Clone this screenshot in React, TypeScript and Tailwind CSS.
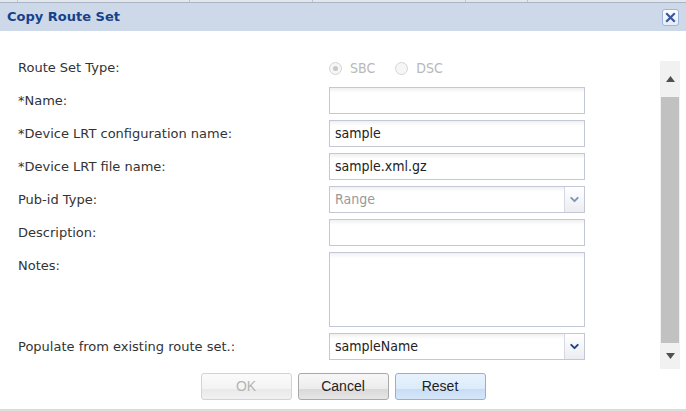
import { ChevronDown } from "lucide-react";

const font = { fontFamily: '"DejaVu Sans Condensed", "DejaVu Sans", sans-serif' };
const labelFont = { fontFamily: '"DejaVu Sans", sans-serif' };

const inputCls =
  "h-[27px] w-[256px] border border-[#c3c7d6] bg-[linear-gradient(to_bottom,#f0f0f0_0px,#ffffff_5px)] px-[5px] text-[14px] text-[#222] flex items-center";

function Field({ value }: { value?: string }) {
  return <div className={inputCls}>{value}</div>;
}

function Select({ value, disabled }: { value: string; disabled?: boolean }) {
  return (
    <div className="flex h-[27px] w-[256px] border border-[#c3c7d6] bg-[linear-gradient(to_bottom,#f0f0f0_0px,#ffffff_5px)]">
      <div
        className={
          "flex flex-1 items-center px-[5px] text-[14px] " +
          (disabled ? "text-[#9a9a9a]" : "text-[#222]")
        }
      >
        {value}
      </div>
      <div className="flex w-[20px] items-center justify-center border-l border-[#d6d9e3] bg-[linear-gradient(to_bottom,#ffffff,#ebedf2)]">
        <ChevronDown
          className={"size-[13px] " + (disabled ? "text-[#7f93b8]" : "text-[#1f3f7f]")}
          strokeWidth={3.5}
        />
      </div>
    </div>
  );
}

function Row({ label, children, top }: { label: string; children: React.ReactNode; top?: boolean }) {
  return (
    <div className={"flex " + (top ? "items-start" : "items-center")}>
      <div className={"w-[311px] text-[13px] text-[#333] " + (top ? "pt-[4px]" : "")} style={labelFont}>
        {label}
      </div>
      {children}
    </div>
  );
}

function Radio({ label, checked }: { label: string; checked?: boolean }) {
  return (
    <div className="flex items-center gap-[8px] text-[14px] text-[#b8b8b8]">
      <span className="flex size-[13px] items-center justify-center rounded-full border border-[#d4d4d4] bg-[#f6f6f6]">
        {checked && <span className="size-[5px] rounded-full bg-[#c8c8c8]" />}
      </span>
      {label}
    </div>
  );
}

function Btn({ label, kind }: { label: string; kind: "off" | "plain" | "blue" }) {
  const cls = {
    off: "border-[#d3d3d3] bg-[linear-gradient(to_bottom,#fbfbfb_0%,#f3f3f3_60%,#e9e9e9_61%,#f1f1f1_100%)] text-[#b4b4b4]",
    plain:
      "border-[#a9a9a9] bg-[linear-gradient(to_bottom,#f7f7f7_0%,#ececec_60%,#d9d9d9_61%,#e6e6e6_100%)] text-[#222]",
    blue: "border-[#8fb0db] bg-[linear-gradient(to_bottom,#e8f2fd_0%,#dcebfb_60%,#c7ddf6_61%,#d6e6f8_100%)] text-[#222]",
  }[kind];
  return (
    <div
      className={"flex h-[27px] w-[91px] items-center justify-center rounded-[3px] border text-[14px] " + cls}
      style={{ fontFamily: '"Liberation Sans", Arial, sans-serif' }}
    >
      {label}
    </div>
  );
}

export default function App() {
  return (
    <div className="flex h-[411px] w-[686px] flex-col overflow-hidden bg-white" style={font}>
      {/* strip of the page behind */}
      <div className="flex h-[3px] border-b border-[#a9b4c4] bg-[#e4e8ee]">
        <div className="w-[18px] border-r border-[#c0c6cf]" />
        <div className="w-[172px] border-r border-[#c0c6cf]" />
        <div className="w-[123px] border-r border-[#c0c6cf]" />
        <div className="w-[153px] border-r border-[#c0c6cf]" />
        <div className="w-[62px] border-r border-[#c0c6cf]" />
      </div>

      {/* title bar */}
      <div className="flex h-[28px] items-center justify-between bg-[#cdd9e8] pl-[7px] pr-[7px]">
        <span className="text-[13px] font-bold text-[#15428b]" style={labelFont}>
          Copy Route Set
        </span>
        <div className="flex size-[17px] items-center justify-center rounded-[3px] border border-[#9fb5dc] bg-[linear-gradient(to_bottom,#ffffff,#e6edf8)]">
          <svg width="11" height="11" viewBox="0 0 11 11">
            <path d="M2 2 L9 9 M9 2 L2 9" stroke="#3b579d" strokeWidth="2.2" strokeLinecap="square" />
          </svg>
        </div>
      </div>

      {/* body */}
      <div className="flex flex-1">
        <div className="flex flex-1 flex-col gap-[6px] pl-[18px] pt-[24px]">
          <Row label="Route Set Type:">
            <div className="flex h-[26px] items-center gap-[20px]">
              <Radio label="SBC" checked />
              <Radio label="DSC" />
            </div>
          </Row>
          <Row label="*Name:">
            <Field />
          </Row>
          <Row label="*Device LRT configuration name:">
            <Field value="sample" />
          </Row>
          <Row label="*Device LRT file name:">
            <Field value="sample.xml.gz" />
          </Row>
          <Row label="Pub-id Type:">
            <Select value="Range" disabled />
          </Row>
          <Row label="Description:">
            <Field />
          </Row>
          <Row label="Notes:" top>
            <div className="h-[75px] w-[256px] border border-[#c3c7d6] bg-[linear-gradient(to_bottom,#f0f0f0_0px,#ffffff_5px)]" />
          </Row>
          <Row label="Populate from existing route set.:">
            <Select value="sampleName" />
          </Row>
        </div>

        {/* scrollbar */}
        <div className="mr-[6px] mt-[30px] flex h-[308px] w-[20px] flex-col bg-[#f1f1f1]">
          <div className="flex h-[36px] items-center justify-center">
            <svg width="9" height="6" viewBox="0 0 9 6">
              <path d="M4.5 0 L9 6 L0 6 Z" fill="#505050" />
            </svg>
          </div>
          <div className="mx-[1px] h-[246px] bg-[#c1c1c1]" />
          <div className="flex flex-1 items-center justify-center">
            <svg width="9" height="6" viewBox="0 0 9 6">
              <path d="M0 0 L9 0 L4.5 6 Z" fill="#505050" />
            </svg>
          </div>
        </div>
      </div>

      {/* buttons */}
      <div className="flex justify-center gap-[6px] pb-[9px] pt-[4px]">
        <Btn label="OK" kind="off" />
        <Btn label="Cancel" kind="plain" />
        <Btn label="Reset" kind="blue" />
      </div>
      <div className="h-[2px] bg-[#dcdcdc]" />
    </div>
  );
}
